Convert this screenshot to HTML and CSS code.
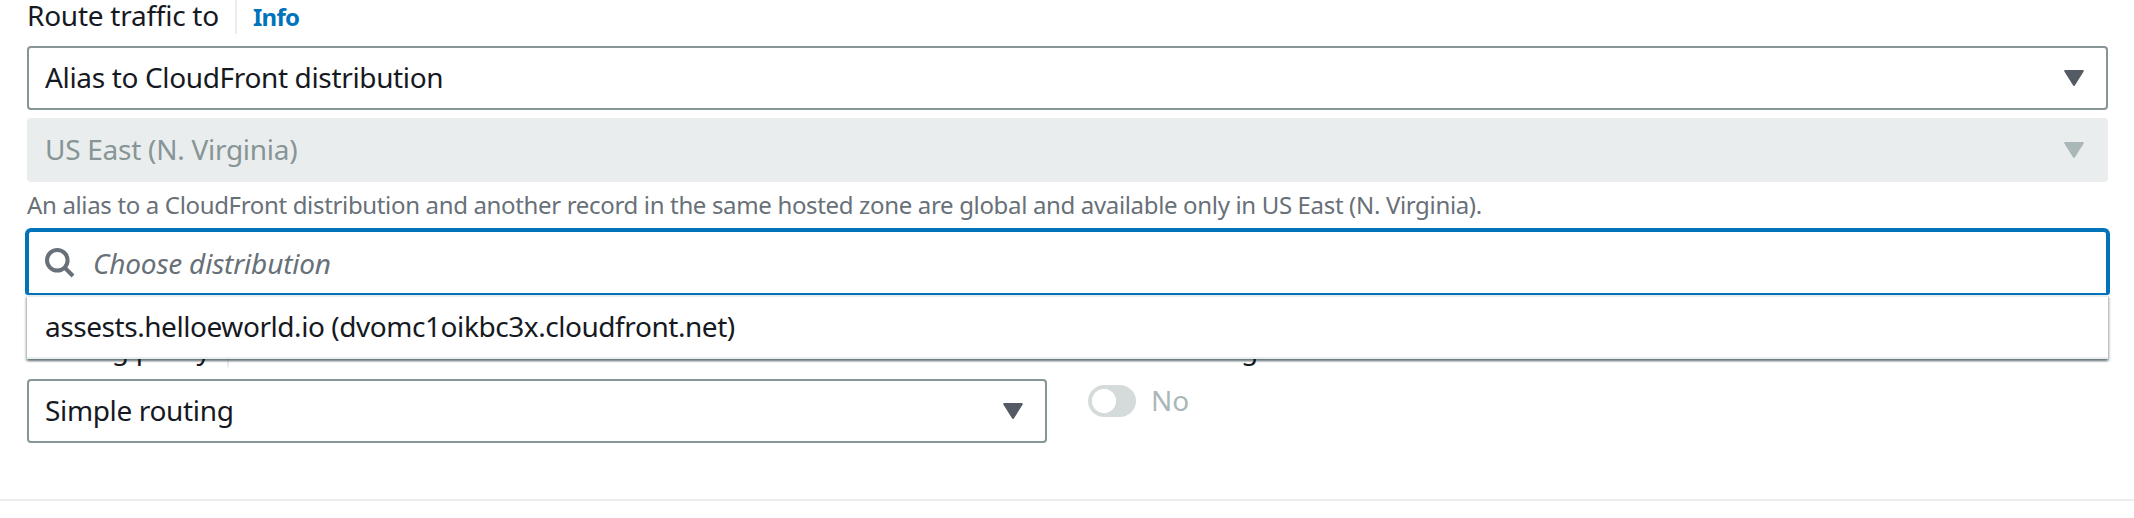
FILE: index.html
```html
<!DOCTYPE html>
<html lang="en">
<head>
<meta charset="utf-8">
<title>Route traffic</title>
<link rel="stylesheet" href="styles.css">
</head>
<body>
<main class="form">
  <div class="label"><span class="label-text">Route traffic to</span><a class="info">Info</a></div>
  <div class="select alias"><span>Alias to CloudFront distribution</span><svg class="caret" viewBox="0 0 20 16"><path d="M1.2 1h17.6L10 15z"/></svg></div>
  <div class="select disabled"><span>US East (N. Virginia)</span><svg class="caret" viewBox="0 0 20 16"><path d="M1.2 1h17.6L10 15z"/></svg></div>
  <p class="hint">An alias to a CloudFront distribution and another record in the same hosted zone are global and available only in US East (N. Virginia).</p>
  <div class="search">
    <svg class="glass" viewBox="0 0 30 30"><circle cx="12.3" cy="12.3" r="10.3"/><path d="M19.5 19.5l8.5 8.5"/></svg>
    <span class="placeholder">Choose distribution</span>
    <div class="menu">assests.helloeworld.io (dvomc1oikbc3x.cloudfront.net)</div>
  </div>
  <div class="columns">
    <div class="column">
      <div class="label"><span class="label-text">Routing policy</span><a class="info">Info</a></div>
      <div class="select"><span>Simple routing</span><svg class="caret" viewBox="0 0 20 16"><path d="M1.2 1h17.6L10 15z"/></svg></div>
    </div>
    <div class="column">
      <div class="label"><span class="label-text">Evaluate target health</span></div>
      <div class="switch"><span class="track"></span><span>No</span></div>
    </div>
  </div>
</main>
</body>
</html>
```
FILE: styles.css
```css
* { box-sizing: border-box; }
body { margin: 0; background: #fff; color: #16191f; font: 28px/44px "Noto Sans", sans-serif; overflow: hidden; height: 518px; }
.form { height: 501px; padding: 0 26px 0 27px; border-bottom: 2px solid #eaeded; }
.label { display: flex; align-items: flex-end; height: 34px; margin-bottom: 12px; white-space: nowrap; }
.label-text { padding-right: 16px; line-height: 38px; letter-spacing: -0.25px; }
.info { border-left: 2px solid #eaeded; padding-left: 16px; color: #0073bb; font-size: 24px; font-weight: 700; line-height: 34px; letter-spacing: -0.7px; }
.select { display: flex; align-items: center; justify-content: space-between; height: 64px; padding: 0 22px 0 16px; border: 2px solid #879596; border-radius: 4px; white-space: nowrap; letter-spacing: -0.35px; }
.select span { padding-bottom: 2px; }
.alias { margin-bottom: 8px; }
.caret { width: 20px; height: 16px; fill: #545b64; stroke: #545b64; stroke-width: 2; stroke-linejoin: round; }
.disabled { background: #eaeded; border-color: #eaeded; color: #879596; letter-spacing: -0.27px; }
.disabled .caret { fill: #aab7b8; stroke: #aab7b8; }
.hint { margin: 0; padding-top: 7px; height: 46px; color: #687078; font-size: 24px; line-height: 32px; white-space: nowrap; letter-spacing: -0.34px; }
.search { position: relative; display: flex; align-items: center; gap: 18px; height: 67px; margin: 0 -2px; padding: 0 16px; border: 4px solid #0073bb; border-bottom-width: 2px; border-radius: 6px 6px 3px 3px; color: #687078; }
.placeholder { font-style: italic; letter-spacing: -0.2px; }
.glass { width: 30px; height: 30px; fill: none; stroke: #687078; stroke-width: 4; }
.menu { position: absolute; top: 63px; left: -2px; right: -2px; height: 64px; padding-left: 18px; background: #fff; border: solid #eaeded; border-width: 2px 0; line-height: 58px; color: #16191f; letter-spacing: -0.44px; box-shadow: 0 2px 2px rgba(0, 28, 36, .45), 2px 2px 2px rgba(0, 28, 36, .15), -2px 2px 2px rgba(0, 28, 36, .15); }
.columns { display: grid; grid-template-columns: 1020px 1fr; gap: 41px; padding-top: 38px; }
.switch { display: flex; align-items: center; gap: 15px; height: 32px; margin-top: 18px; color: #aab7b8; }
.switch span:last-child { padding-bottom: 2px; }
.column .label { margin-bottom: 12px; }
.column .switch { margin-top: 18px; }
.track { width: 48px; height: 32px; border-radius: 16px; background: radial-gradient(circle at 16px 16px, #fff 11.8px, #d5dbdb 12.3px); }
```
